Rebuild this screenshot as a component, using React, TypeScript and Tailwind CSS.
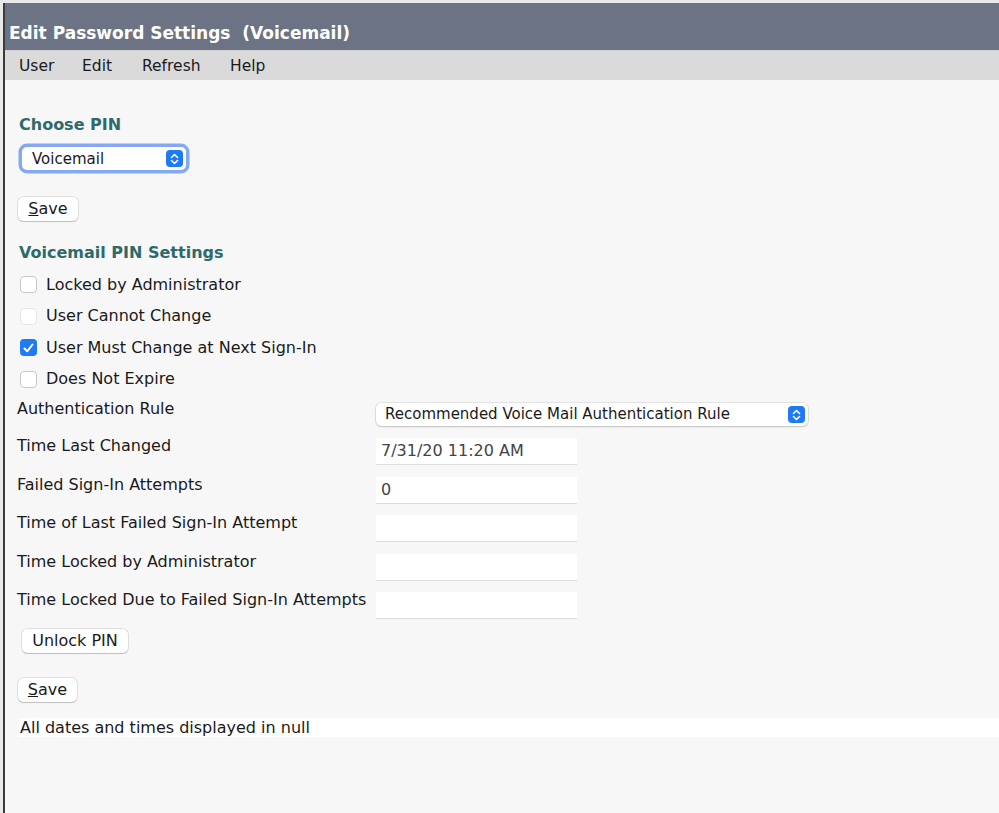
import React from 'react';

const font = { fontFamily: '"DejaVu Sans", Verdana, sans-serif' };

function Stepper() {
  return (
    <div className="w-[17px] h-[17px] rounded-[4px] bg-[#1f7bf5] flex items-center justify-center">
      <svg width="9" height="12" viewBox="0 0 9 12" fill="none" stroke="white" strokeWidth="1.6" strokeLinecap="round" strokeLinejoin="round">
        <path d="M1.5 4.5 L4.5 1.5 L7.5 4.5" />
        <path d="M1.5 7.5 L4.5 10.5 L7.5 7.5" />
      </svg>
    </div>
  );
}

function Check({ checked, disabled }: { checked?: boolean; disabled?: boolean }) {
  if (checked) {
    return (
      <div className="w-[17px] h-[17px] rounded-[4px] bg-[#1f7bf5] flex items-center justify-center">
        <svg width="11" height="10" viewBox="0 0 11 10" fill="none" stroke="white" strokeWidth="2" strokeLinecap="round" strokeLinejoin="round">
          <path d="M1.5 5.5 L4.2 8.3 L9.5 1.5" />
        </svg>
      </div>
    );
  }
  return (
    <div
      className={
        'w-[17px] h-[17px] rounded-[4px] bg-white border ' +
        (disabled ? 'border-[#e6e6e6]' : 'border-[#c8c8c8]')
      }
    />
  );
}

function Btn({ children, className }: { children: React.ReactNode; className?: string }) {
  return (
    <div
      className={
        'h-[24px] rounded-[5px] bg-white flex items-center justify-center text-[16px] text-[#1a1a1a] shadow-[0_0_0_0.5px_rgba(0,0,0,0.18),0_1px_1px_rgba(0,0,0,0.15)] ' +
        (className ?? '')
      }
    >
      {children}
    </div>
  );
}

const checks = [
  { label: 'Locked by Administrator' },
  { label: 'User Cannot Change', disabled: true },
  { label: 'User Must Change at Next Sign-In', checked: true },
  { label: 'Does Not Expire' },
];

const fields = [
  { label: 'Time Last Changed', value: '7/31/20 11:20 AM', h: 'h-[39px]' },
  { label: 'Failed Sign-In Attempts', value: '0', h: 'h-[38px]' },
  { label: 'Time of Last Failed Sign-In Attempt', value: '', h: 'h-[39px]' },
  { label: 'Time Locked by Administrator', value: '', h: 'h-[38px]' },
  { label: 'Time Locked Due to Failed Sign-In Attempts', value: '', h: 'h-[36px]' },
];

export default function App() {
  return (
    <div className="w-[999px] h-[813px] bg-[#e9e9e9] pl-[3px] pt-[3px] flex overflow-hidden" style={font}>
      <div className="flex-1 flex flex-col border-l-2 border-[#3b3b3b] bg-[#f7f7f7] text-[#1a1a1a]">
        {/* Title bar */}
        <div className="h-[47px] bg-[#6c7385] flex items-center pl-[4px] pt-[14px]">
          <h1 className="text-[17px] font-bold text-white whitespace-pre">Edit Password Settings  (Voicemail)</h1>
        </div>

        {/* Menu */}
        <div className="h-[30px] bg-[#dadada] flex items-center text-[15.5px] pl-[14px] pt-[3px] border-t border-[#cfcfcf]">
          <span className="w-[63px]">User</span>
          <span className="w-[60px]">Edit</span>
          <span className="w-[88px]">Refresh</span>
          <span>Help</span>
        </div>

        <div className="flex flex-col pl-[14px] pt-[36px]">
          <h2 className="text-[16px] leading-[18px] font-bold text-[#2e6a6a]">Choose PIN</h2>

          <div className="mt-[13px] ml-[3px] w-[164px] h-[23px] rounded-[5px] bg-white ring-[3.5px] ring-[#84a9f2] flex items-center justify-between pl-[10px] pr-[3px] text-[15px]">
            <span className="pt-[2px]">Voicemail</span>
            <Stepper />
          </div>

          <Btn className="mt-[27px] -ml-[1px] w-[60px]">
            <span><span className="underline">S</span>ave</span>
          </Btn>

          <h2 className="mt-[23px] text-[16px] leading-[18px] font-bold text-[#2e6a6a]">Voicemail PIN Settings</h2>

          <div className="mt-[7px] flex flex-col">
            {checks.map((c) => (
              <div key={c.label} className="h-[31.5px] flex items-center gap-[9px] pl-[1px] text-[16px]">
                <Check checked={c.checked} disabled={c.disabled} />
                <span>{c.label}</span>
              </div>
            ))}
          </div>

          {/* Authentication rule */}
          <div className="-ml-[2px] h-[43px] flex items-start">
            <span className="w-[359px] text-[16px] leading-[18px] pt-[5px]">Authentication Rule</span>
            <div className="mt-[8px] w-[432px] h-[23px] rounded-[5px] bg-white shadow-[0_0_0_0.5px_rgba(0,0,0,0.15),0_1px_2px_rgba(0,0,0,0.15)] flex items-center justify-between pl-[9px] pr-[3px] text-[15px]">
              <span>Recommended Voice Mail Authentication Rule</span>
              <Stepper />
            </div>
          </div>

          {fields.map((f) => (
            <div key={f.label} className={'-ml-[2px] flex items-start ' + f.h}>
              <span className="w-[359px] text-[16px] leading-[18px] -mt-[1px]">{f.label}</span>
              <div className="w-[201px] h-[27px] bg-white border-b border-[#dcdcdc] flex items-center pl-[5px] text-[16px] text-[#444]">
                {f.value}
              </div>
            </div>
          ))}

          <Btn className="mt-[1px] ml-[3px] w-[106px]">Unlock PIN</Btn>

          <Btn className="mt-[25px] -ml-[1px] w-[59px]">
            <span><span className="underline">S</span>ave</span>
          </Btn>

          <div className="mt-[16px] h-[19px] bg-white flex items-center pl-[1px] text-[16px]">
            All dates and times displayed in null
          </div>
        </div>
      </div>
    </div>
  );
}
